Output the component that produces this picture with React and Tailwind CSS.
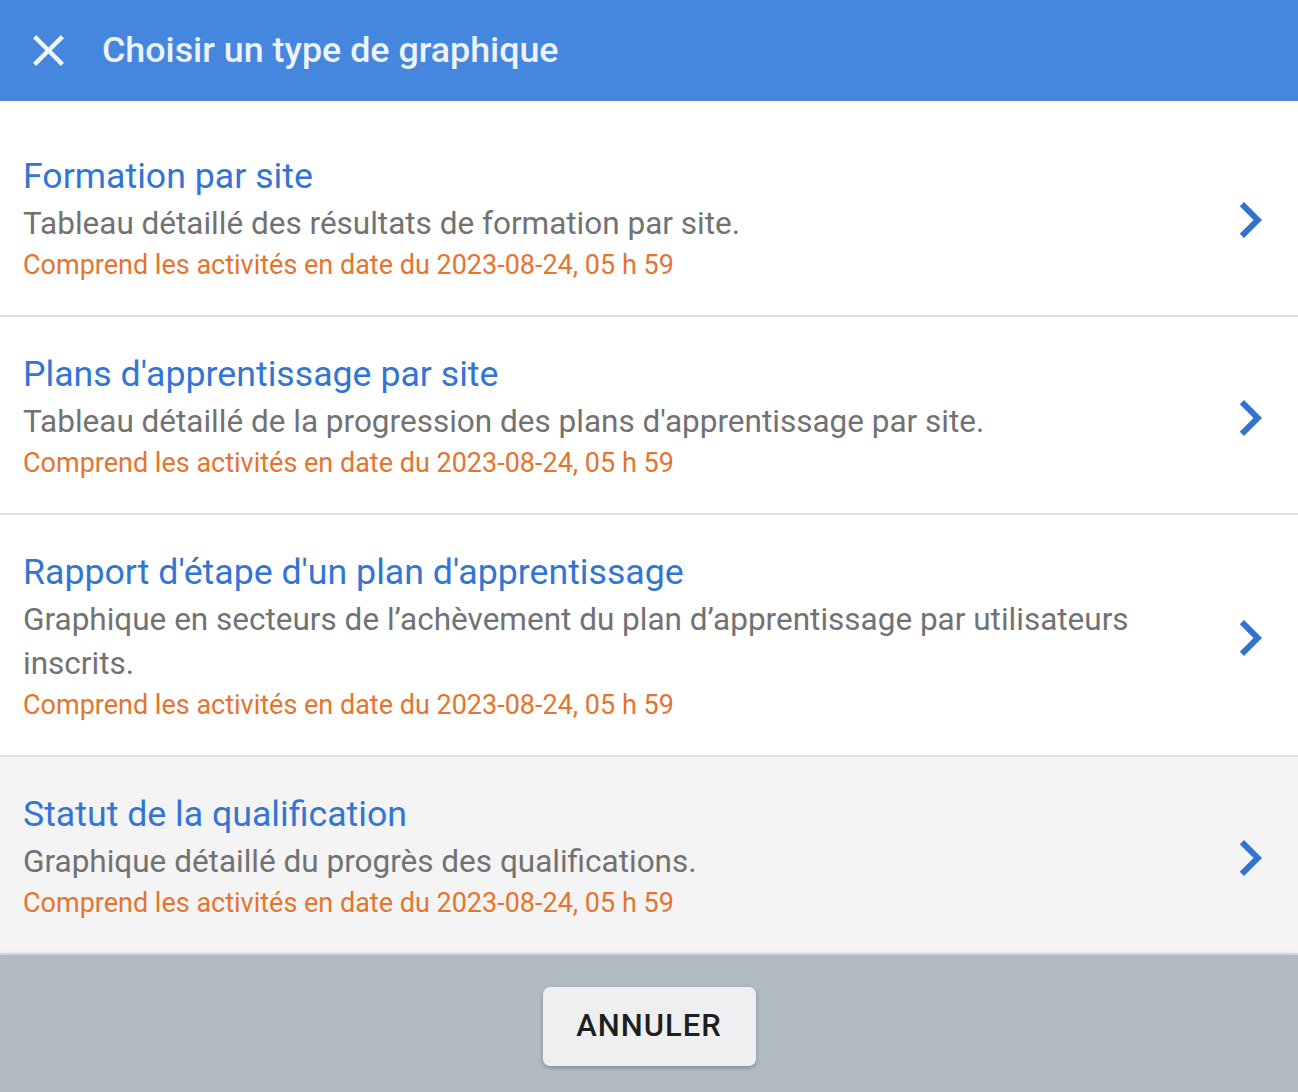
const charts = [
  {
    id: 'training-site',
    title: 'Formation par site',
    desc: 'Tableau détaillé des résultats de formation par site.',
  },
  {
    id: 'plans-site',
    title: "Plans d'apprentissage par site",
    desc: "Tableau détaillé de la progression des plans d'apprentissage par site.",
  },
  {
    id: 'plan-stage',
    title: "Rapport d'étape d'un plan d'apprentissage",
    desc: 'Graphique en secteurs de l’achèvement du plan d’apprentissage par utilisateurs inscrits.',
  },
  {
    id: 'qualif',
    title: 'Statut de la qualification',
    desc: 'Graphique détaillé du progrès des qualifications.',
    hover: true,
  },
]

function Chevron() {
  return (
    <svg width="72" height="72" viewBox="0 0 24 24" className="shrink-0 fill-[#3273d2]">
      <path d="M10 6L8.59 7.41 13.17 12l-4.58 4.59L10 18l6-6z" />
    </svg>
  )
}

function CloseIcon() {
  return (
    <svg width="53" height="53" viewBox="0 0 24 24" className="shrink-0 fill-[#f1f5fc]">
      <path d="M19 6.41L17.59 5 12 10.59 6.41 5 5 6.41 10.59 12 5 17.59 6.41 19 12 13.41 17.59 19 19 17.59 13.41 12z" />
    </svg>
  )
}

export default function App() {
  return (
    <div className="flex h-[1092px] w-full flex-col bg-white font-['Roboto',sans-serif]">
      <header className="flex h-[101px] shrink-0 items-center bg-[#4587de] pl-[22px]">
        <CloseIcon />
        <h1 className="ml-[27px] text-[35.8px] font-medium text-[#eef3fb]">
          Choisir un type de graphique
        </h1>
      </header>

      <ul className="flex-1 pt-[18px]">
        {charts.map((c) => (
          <li
            key={c.id}
            className={`flex items-center border-b-2 border-[#e0e0e0] pb-[31px] pl-[23px] pr-[12px] pt-[37px] ${
              c.hover ? 'bg-[#f4f4f4]' : ''
            }`}
          >
            <div className="flex-1 pr-[70px]">
              <div className="text-[35.7px] leading-[40px] text-[#3275d4]">{c.title}</div>
              <p className="mt-[6px] text-[31.5px] leading-[44px] text-[#727272]">{c.desc}</p>
              <p className="text-[27px] leading-[38px] text-[#e5742e]">
                Comprend les activités en date du 2023-08-24, 05 h 59
              </p>
            </div>
            <Chevron />
          </li>
        ))}
      </ul>

      <footer className="flex h-[137px] shrink-0 items-center justify-center bg-[#b0bbc2] pt-[5px] shadow-[0_-2px_4px_rgba(0,0,0,0.08)]">
        <button className="h-[79px] w-[213px] rounded-[7px] bg-[#eeeff1] text-[31px] font-medium tracking-[1px] text-[#1f1f1f] shadow-[0_2px_4px_rgba(0,0,0,0.25)]">
          ANNULER
        </button>
      </footer>
    </div>
  )
}
